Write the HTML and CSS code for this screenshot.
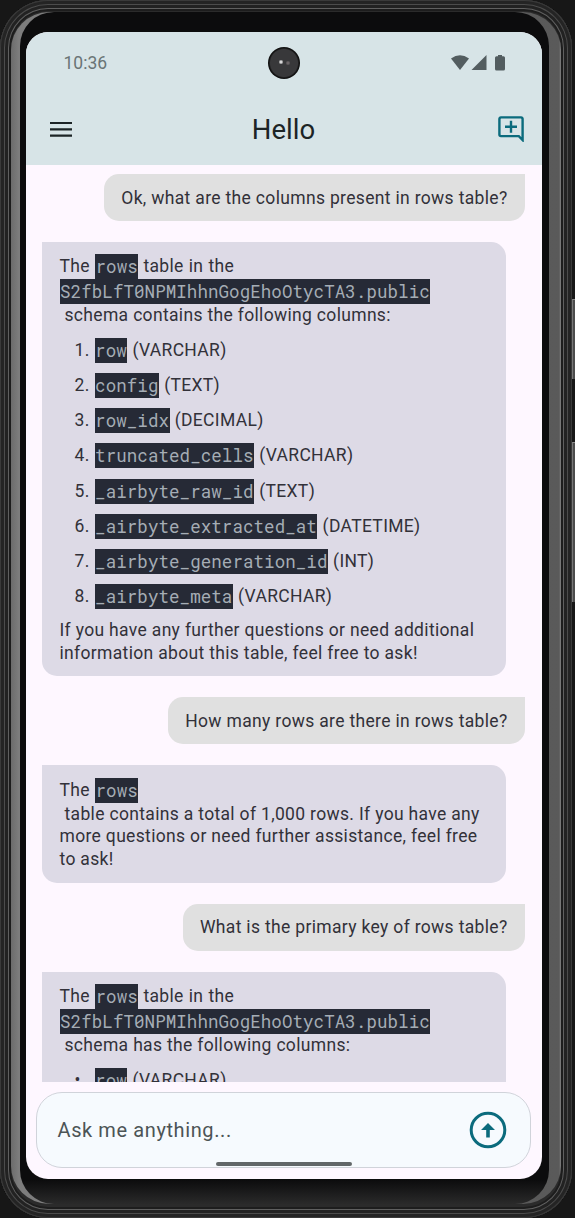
FILE: index.html
```html
<!DOCTYPE html>
<html lang="en">
<head>
<meta charset="utf-8">
<title>Hello</title>
<link rel="stylesheet" href="styles.css">
</head>
<body>
<div class="device">
  <span class="side-key power"></span>
  <span class="side-key volume"></span>
  <div class="rim">
    <div class="bezel">
      <main class="screen">
        <header class="top">
          <div class="status">
            <span class="clock">10:36</span>
            <span class="camera"></span>
            <svg class="status-icons" width="58" height="18" viewBox="0 0 58 18">
              <path d="M1 4.500 Q10 -2 19 4.500 L10 16 Z"/>
              <path d="M21.500 16 L36.500 1 V16 Z"/>
              <path d="M48 1h4v1.200h1.500q1.500 0 1.500 1.500v11.300q0 1.500-1.500 1.500h-7q-1.500 0-1.500-1.500V3.700q0-1.500 1.500-1.500H48z"/>
            </svg>
          </div>
          <div class="appbar">
            <svg class="menu" width="24" height="18" viewBox="0 0 24 18"><path d="M1 3h22M1 9.300h22M1 15.600h22"/></svg>
            <h1>Hello</h1>
            <svg class="new-chat" width="26" height="26" viewBox="0 0 26 26">
              <path d="M24.600 24V3q0-1.600-1.600-1.600H3Q1.400 1.400 1.400 3v15.500q0 1.600 1.600 1.600h17.800z"/>
              <path d="M13 4.800v12M7 10.800h12"/>
            </svg>
          </div>
        </header>
        <section class="chat">
          <p class="user"><span>Ok, what are the columns present in rows table?</span></p>
          <div class="bot">
            <p class="mixed">The <code>rows</code> table in the</p>
            <p class="mixed"><code>S2fbLfT0NPMIhhnGogEhoOtycTA3.public</code></p>
            <p class="after">schema contains the following columns:</p>
            <ol>
              <li><b>1.</b><code>row</code> (VARCHAR)</li>
              <li><b>2.</b><code>config</code> (TEXT)</li>
              <li><b>3.</b><code>row_idx</code> (DECIMAL)</li>
              <li><b>4.</b><code>truncated_cells</code> (VARCHAR)</li>
              <li><b>5.</b><code>_airbyte_raw_id</code> (TEXT)</li>
              <li><b>6.</b><code>_airbyte_extracted_at</code> (DATETIME)</li>
              <li><b>7.</b><code>_airbyte_generation_id</code> (INT)</li>
              <li><b>8.</b><code>_airbyte_meta</code> (VARCHAR)</li>
            </ol>
            <p>If you have any further questions or need additional<br>information about this table, feel free to ask!</p>
          </div>
          <p class="user"><span>How many rows are there in rows table?</span></p>
          <div class="bot">
            <p class="mixed">The <code>rows</code></p>
            <p class="after">table contains a total of 1,000 rows. If you have any</p>
            <p>more questions or need further assistance, feel free<br>to ask!</p>
          </div>
          <p class="user"><span>What is the primary key of rows table?</span></p>
          <div class="bot">
            <p class="mixed">The <code>rows</code> table in the</p>
            <p class="mixed"><code>S2fbLfT0NPMIhhnGogEhoOtycTA3.public</code></p>
            <p class="after">schema has the following columns:</p>
            <ol>
              <li><b>•</b><code>row</code> (VARCHAR)</li>
            </ol>
          </div>
        </section>
        <footer class="composer">
          <span>Ask me anything...</span>
          <svg width="38" height="38" viewBox="0 0 38 38">
            <circle cx="19" cy="19" r="16.800"/>
            <path d="M17.200 26.500V19H12l7-7 7 7h-5.200v7.500z"/>
          </svg>
          <i class="handle"></i>
        </footer>
      </main>
    </div>
  </div>
</div>
</body>
</html>
```
FILE: styles.css
```css
* { box-sizing: border-box; }
body { margin: 0; background: #171717; font-family: Roboto, sans-serif; overflow: hidden; }
h1, p, ol { margin: 0; padding: 0; }
.device {
  position: relative; width: 572px; height: 1218px; padding: 12px 11px 14px 11px;
  border-radius: 48px;
  background: #2b2b2b;
  box-shadow: inset 0 0 0 1px #3a3a3a, inset 0 0 0 4px #242424, inset 0 0 0 5px #4c4c4c, inset 0 0 0 8px #222, inset 0 0 0 9px #606060, inset 0 0 0 11px #1d1d1d;
}
.side-key { position: absolute; right: -3px; width: 3px; background: #4c4c4c; border-top: 1px solid #8a8a8a; border-left: 1px solid #777; }
.power { top: 299px; height: 80px; }
.volume { top: 442px; height: 160px; }
.rim {
  height: 100%; padding: 0 12px 0 9px; border-radius: 38px;
  background: linear-gradient(90deg, #6c6c6c 0, #7d7d7d 8px, #7d7d7d 50%, #565656 50%, #5a5a5a 99.7%, #777 99.8%);
}
.bezel { height: 100%; padding: 20px 7px 25px 6px; border-radius: 34px; background: linear-gradient(#0c0c0d 0 1168px, #2a2a2a 100%); }
.screen {
  position: relative; display: flex; flex-direction: column;
  width: 516px; height: 1147px; overflow: hidden;
  border-radius: 22px; background: #fef7ff;
}
.top { height: 133px; flex: none; background: #d7e4e7; }
.status { position: relative; display: flex; justify-content: space-between; align-items: center; height: 62px; padding: 0 34px 0 37.500px; }
.clock { font-size: 17.500px; letter-spacing: 0; color: #6a7476; }
.camera {
  position: absolute; left: 242px; top: 15px; width: 32px; height: 32px; border-radius: 50%;
  background: radial-gradient(circle at 13px 15px, #d8d8d8 0 1px, transparent 2.500px), radial-gradient(circle at 20px 16px, #6a6466 0 1px, transparent 2.500px), radial-gradient(circle, #38383a 13.500px, #111 15px);
}
.status-icons { fill: #535d60; }
.appbar { display: flex; align-items: center; justify-content: space-between; height: 70px; padding: 0 18px 0 23px; }
.menu { fill: none; stroke: #1c2426; stroke-width: 2.200; }
h1 { margin-right: 4px; font-size: 27.500px; font-weight: 400; color: #1c2426; }
.new-chat { fill: none; stroke: #0b6b7d; stroke-width: 2.400; }
.chat { height: 917px; flex: none; overflow: hidden; padding: 9px 17px 0 16px; font-size: 17.500px; line-height: 22.700px; letter-spacing: .33px; color: #323139; white-space: nowrap; }
.user { width: max-content; height: 47px; margin: 0 0 21px auto; padding: 12.500px 17.500px 12px 17px; border-radius: 15px 0 15px 15px; background: #e0e0e0; }
.bot { width: 464px; margin-bottom: 21px; padding: 12.300px 17.500px 12px; border-radius: 0 15px 15px 15px; background: #dddae6; }
.mixed, li { height: 25px; line-height: 25px; word-spacing: .4px; }
.after { padding-left: 5px; }
code {
  display: inline-block; height: 25px; padding: 0 .6px; line-height: 26.500px; vertical-align: top;
  font-family: "Roboto Mono", "DejaVu Sans Mono", monospace; font-size: 17.500px; letter-spacing: .06px;
  color: #a5adb5; background: #262a36;
}
ol { display: grid; gap: 10.150px; padding: 11px 0 10px; list-style: none; }
li { display: block; }
b { display: inline-block; width: 35px; padding-left: 15px; font-weight: 400; }
.composer {
  position: relative; display: flex; align-items: center; justify-content: space-between;
  width: 495px; height: 76px; margin: 10px 0 0 10px; padding: 0 23px 0 20.500px;
  border: 1px solid #d0d3da; border-radius: 26px; background: #f6fafe;
  font-size: 20px; letter-spacing: .6px; color: #4c5456;
}
.composer svg { fill: #0b6b7d; }
.composer circle { fill: none; stroke: #0b6b7d; stroke-width: 3; }
.handle { position: absolute; left: 178.500px; bottom: 1px; width: 136px; height: 4px; border-radius: 2px; background: #626769; }
```
